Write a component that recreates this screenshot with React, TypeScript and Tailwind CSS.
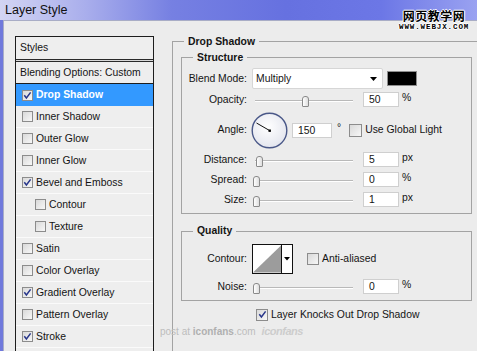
import React from 'react';

type StyleItem = { label: string; checked?: boolean; indent?: boolean };

const styleItems: StyleItem[] = [
  { label: 'Inner Shadow' },
  { label: 'Outer Glow' },
  { label: 'Inner Glow' },
  { label: 'Bevel and Emboss', checked: true },
  { label: 'Contour', indent: true },
  { label: 'Texture', indent: true },
  { label: 'Satin' },
  { label: 'Color Overlay' },
  { label: 'Gradient Overlay', checked: true },
  { label: 'Pattern Overlay' },
  { label: 'Stroke', checked: true },
  { label: '' },
];

const Check: React.FC<{ checked?: boolean; className?: string }> = ({ checked, className = '' }) => (
  <span
    className={`flex h-[11px] w-[11px] shrink-0 items-center justify-center border border-[#8c8c8c] bg-[linear-gradient(135deg,#d9d9d9,#f7f7f7)] ${className}`}
  >
    {checked && (
      <svg width="9" height="9" viewBox="0 0 9 9">
        <path d="M1.3 4.3 L3.4 7 L7.6 1.4" stroke="#27358a" strokeWidth="1.5" fill="none" />
      </svg>
    )}
  </span>
);

const StyleRow: React.FC<{ item: StyleItem }> = ({ item }) => (
  <div
    className={`flex h-[22px] items-center gap-[3px] border-b border-[#fafafa] ${item.indent ? 'pl-[19px]' : 'pl-[6px]'}`}
  >
    {item.label && <Check checked={item.checked} />}
    <span>{item.label}</span>
  </div>
);

const Label: React.FC<{ children: React.ReactNode }> = ({ children }) => (
  <div className="w-[65px] shrink-0 text-right">{children}</div>
);

const ValueBox: React.FC<{ value: string; className?: string }> = ({ value, className = 'w-[36px]' }) => (
  <div className={`h-[15px] shrink-0 border border-[#cfcfcf] bg-white pl-[5px] leading-[13px] ${className}`}>
    {value}
  </div>
);

// pos = thumb offset along the 98px track
const Slider: React.FC<{ pos: number }> = ({ pos }) => (
  <div className="relative ml-[3px] h-[15px] w-[98px] shrink-0">
    <div className="absolute left-0 right-0 top-[8px] h-[2px] border-t border-[#b9b9b9] bg-white" />
    <div
      className="absolute top-[4px] h-[11px] w-[7px] rounded-t-[3px] rounded-b-[1px] border border-[#8a8a8a] bg-[linear-gradient(90deg,#ffffff,#dedede)]"
      style={{ left: pos }}
    />
  </div>
);

const SliderRow: React.FC<{ label: string; pos: number; value: string; unit: string; className?: string }> = ({
  label,
  pos,
  value,
  unit,
  className = '',
}) => (
  <div className={`flex h-[15px] items-center ${className}`}>
    <Label>{label}</Label>
    <div className="ml-[5px] flex items-center">
      <Slider pos={pos} />
      <ValueBox value={value} className="ml-[10px] w-[36px]" />
      <span className="ml-[3px] self-start leading-[11px]">{unit}</span>
    </div>
  </div>
);

const AngleDial: React.FC = () => (
  <svg width="37" height="37" viewBox="0 0 37 37" className="shrink-0">
    <defs>
      <radialGradient id="dial" cx="45%" cy="40%" r="60%">
        <stop offset="0%" stopColor="#ffffff" />
        <stop offset="100%" stopColor="#e4e6ee" />
      </radialGradient>
    </defs>
    <circle cx="18.5" cy="18.5" r="17.3" fill="url(#dial)" stroke="#4a5888" strokeWidth="1.4" />
    <line x1="18.5" y1="18.5" x2="5.5" y2="11" stroke="#111" strokeWidth="1" />
    <rect x="17.5" y="17.5" width="2.4" height="2.4" fill="#000" />
  </svg>
);

const ContourPicker: React.FC = () => (
  <div className="flex h-[30px] w-[41px] shrink-0 border border-[#111] bg-white">
    <svg width="29" height="28" viewBox="0 0 29 28" className="border-r border-[#111]">
      <polygon points="0,28 29,0 29,28" fill="#9c9c9c" />
    </svg>
    <div className="flex flex-1 items-start justify-center pt-[12px]">
      <svg width="6" height="4" viewBox="0 0 6 4">
        <polygon points="0,0 6,0 3,3.5" fill="#000" />
      </svg>
    </div>
  </div>
);

export default function App() {
  return (
    <div className="relative h-[351px] w-[477px] overflow-hidden bg-[#7079dc] font-['Liberation_Sans',Arial,sans-serif] text-[10.4px] text-[#141414]">
      {/* title bar */}
      <div className="h-[20px] bg-[linear-gradient(90deg,#d3d5f3_0%,#a9aeec_18%,#7680e2_36%,#6671e0_60%,#6c77e6_80%,#9aa2f1_100%)] pl-[5px] pt-[2px] text-[12.5px] leading-[16px] text-[#101010]">
        Layer Style
      </div>

      <div className="flex h-[331px]">
        <div className="w-[3px] shrink-0 bg-[#7079dc]" />
        <div className="flex min-w-0 flex-1 overflow-hidden border-l border-t border-[#a9adc6] bg-[#ececec] pl-[11px] pt-[15px]">
          {/* styles list */}
          <div className="w-[139px] shrink-0 border-x border-t border-[#1d1d1d] bg-[#eeeeee]">
            <div className="flex h-[22px] items-center pl-[4px]">Styles</div>
            <div className="h-[3px] border-y border-[#2a2a2a] bg-[#d8d8d8]" />
            <div className="flex h-[22px] items-center border-b border-[#1d1d1d] pl-[4px]">Blending Options: Custom</div>
            <div className="flex h-[22px] items-center gap-[3px] bg-[#3399ff] pl-[6px] font-bold text-white">
              <Check checked className="border-[#7a7a7a]" />
              <span>Drop Shadow</span>
            </div>
            {styleItems.map((item, i) => (
              <StyleRow key={i} item={item} />
            ))}
          </div>

          {/* settings */}
          <fieldset className="ml-[18px] mt-[-2px] w-[320px] shrink-0 border-l border-t border-[#a3a3a3] pl-[8px]">
            <legend className="ml-[3px] px-[4px] font-bold">Drop Shadow</legend>

            <fieldset className="mt-0 w-[291px] border border-[#a3a3a3] pb-[6px]">
              <legend className="ml-[11px] px-[4px] font-bold">Structure</legend>

              <div className="mt-[3px] flex h-[21px] items-center">
                <Label>Blend Mode:</Label>
                <div className="ml-[5px] flex h-[21px] w-[131px] items-center justify-between rounded-[2px] border border-[#d6d6d6] bg-white pl-[3px] pr-[5px]">
                  <span>Multiply</span>
                  <svg width="7" height="4" viewBox="0 0 7 4">
                    <polygon points="0,0 7,0 3.5,4" fill="#000" />
                  </svg>
                </div>
                <div className="ml-[4px] h-[15px] w-[30px] border border-[#8e8e8e] bg-black" />
              </div>

              <SliderRow label="Opacity:" pos={47} value="50" unit="%" className="mt-[3px]" />

              <div className="mt-[5px] flex h-[36px] items-center">
                <Label>Angle:</Label>
                <div className="ml-[4px] flex items-center">
                  <AngleDial />
                  <ValueBox value="150" className="ml-[4px] w-[40px]" />
                  <span className="ml-[5px] self-start pt-[10px] leading-[11px]">°</span>
                  <Check className="ml-[8px] h-[13px] w-[13px]" />
                  <span className="ml-[3px]">Use Global Light</span>
                </div>
              </div>

              <SliderRow label="Distance:" pos={1} value="5" unit="px" className="mt-[4px]" />
              <SliderRow label="Spread:" pos={-2} value="0" unit="%" className="mt-[5px]" />
              <SliderRow label="Size:" pos={-2} value="1" unit="px" className="mt-[5px]" />
            </fieldset>

            <fieldset className="mt-[9px] w-[291px] border border-[#a3a3a3] pb-[6px]">
              <legend className="ml-[11px] px-[4px] font-bold">Quality</legend>

              <div className="mt-[5px] flex h-[30px] items-center">
                <Label>Contour:</Label>
                <div className="ml-[5px] flex items-center">
                  <ContourPicker />
                  <Check className="ml-[14px] h-[12px] w-[12px]" />
                  <span className="ml-[3px]">Anti-aliased</span>
                </div>
              </div>

              <SliderRow label="Noise:" pos={-2} value="0" unit="%" className="mt-[5px]" />
            </fieldset>

            <div className="ml-[75px] mt-[6px] flex items-center gap-[3px]">
              <Check checked className="h-[12px] w-[12px]" />
              <span>Layer Knocks Out Drop Shadow</span>
            </div>
          </fieldset>
        </div>
      </div>

      {/* watermarks */}
      <div className="absolute left-[399px] top-[8px] flex flex-col items-center">
        <span className="font-['Noto_Sans_CJK_SC',sans-serif] text-[12px] font-bold leading-[15px] tracking-[0.5px] text-black [text-shadow:1px_0_#fff,-1px_0_#fff,0_1px_#fff,0_-1px_#fff]">
          网页教学网
        </span>
        <span className="font-['Liberation_Mono',monospace] text-[7.5px] font-bold leading-[8px] tracking-[0.9px] text-black [text-shadow:1px_0_#fff,-1px_0_#fff,0_1px_#fff,0_-1px_#fff]">
          WWW.WEBJX.COM
        </span>
      </div>
      <div className="absolute left-[160px] top-[323px] flex items-baseline text-[10px] text-[#bdbdbd]">
        <span>post at&nbsp;</span>
        <span className="font-bold text-[#b0b0b0]">iconfans</span>
        <span>.com</span>
        <span className="ml-[6px] text-[11px] font-bold italic tracking-[-0.5px] text-[#cdcdcd]">iconfans</span>
      </div>
    </div>
  );
}
